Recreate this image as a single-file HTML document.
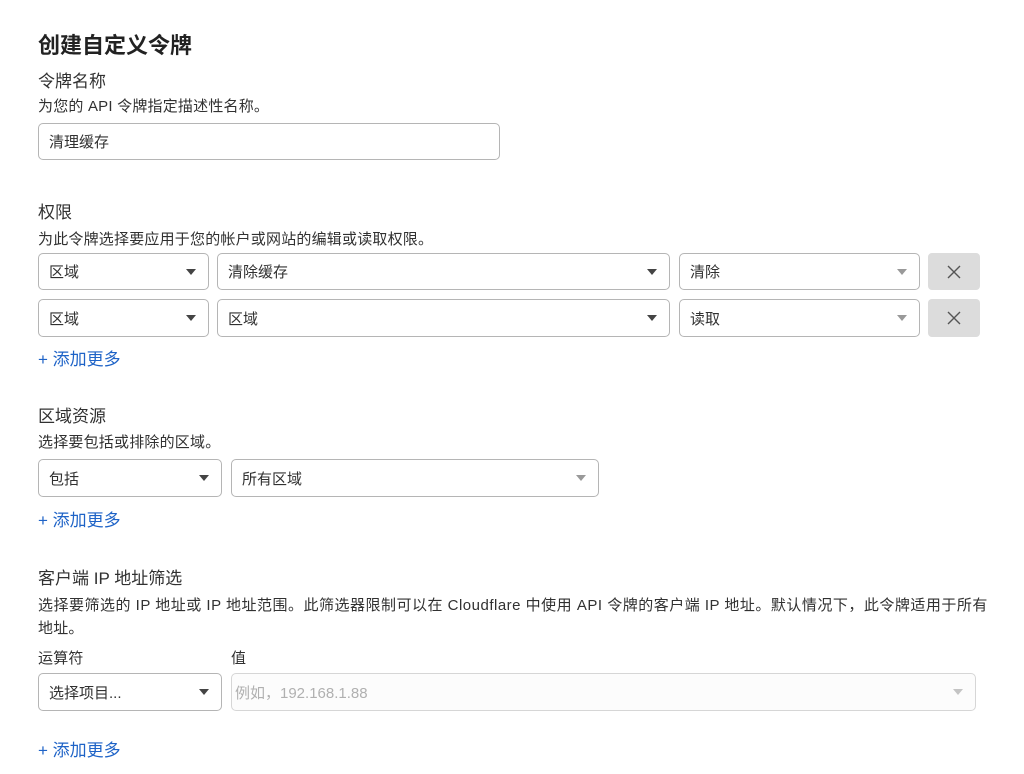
<!DOCTYPE html>
<html><head><meta charset="utf-8"><style>
*{box-sizing:border-box;margin:0;padding:0}
body{width:1024px;height:774px;background:#fff;font-family:"Liberation Sans","Noto Sans CJK SC",sans-serif;color:#313131;position:relative;overflow:hidden}
.a{position:absolute;white-space:nowrap}
.t{font-size:22px;font-weight:bold;color:#222}
.l{font-size:17px;color:#313131}
.d{font-size:15px;color:#313131;letter-spacing:0.2px}
.b{position:absolute;border:1px solid #b5b5b5;border-radius:5px;background:#fff;font-size:15px;color:#313131;padding-left:10px;display:flex;align-items:center}
.b .ar{position:absolute;right:12px;top:50%;margin-top:-3px;width:0;height:0;border-left:5px solid transparent;border-right:5px solid transparent;border-top:6px solid #444}
.b .ar.g{border-top-color:#999}
.x{position:absolute;background:#dcdcdc;border-radius:4px;display:flex;align-items:center;justify-content:center}
.add{font-size:17px;color:#1e63c7}
</style></head><body>
<div class="a t" style="left:38px;top:28px">创建自定义令牌</div>
<div class="a l" style="left:38px;top:67px">令牌名称</div>
<div class="a d" style="left:38px;top:95px">为您的 API 令牌指定描述性名称。</div>
<div class="b" style="left:38px;top:123px;width:462px;height:37px">清理缓存</div>

<div class="a l" style="left:38px;top:198px">权限</div>
<div class="a d" style="left:38px;top:228px">为此令牌选择要应用于您的帐户或网站的编辑或读取权限。</div>
<div class="b" style="left:38px;top:253px;width:171px;height:37px">区域<span class="ar"></span></div>
<div class="b" style="left:217px;top:253px;width:453px;height:37px">清除缓存<span class="ar"></span></div>
<div class="b" style="left:679px;top:253px;width:241px;height:37px">清除<span class="ar g"></span></div>
<div class="x" style="left:928px;top:253px;width:52px;height:37px"><svg width="16" height="16"><path d="M2 2L14 14M14 2L2 14" stroke="#555" stroke-width="1.4"/></svg></div>
<div class="b" style="left:38px;top:299px;width:171px;height:38px">区域<span class="ar"></span></div>
<div class="b" style="left:217px;top:299px;width:453px;height:38px">区域<span class="ar"></span></div>
<div class="b" style="left:679px;top:299px;width:241px;height:38px">读取<span class="ar g"></span></div>
<div class="x" style="left:928px;top:299px;width:52px;height:38px"><svg width="16" height="16"><path d="M2 2L14 14M14 2L2 14" stroke="#555" stroke-width="1.4"/></svg></div>
<div class="a add" style="left:38px;top:345px">+&nbsp;添加更多</div>

<div class="a l" style="left:38px;top:402px">区域资源</div>
<div class="a d" style="left:38px;top:431px">选择要包括或排除的区域。</div>
<div class="b" style="left:38px;top:459px;width:184px;height:38px">包括<span class="ar"></span></div>
<div class="b" style="left:231px;top:459px;width:368px;height:38px">所有区域<span class="ar g"></span></div>
<div class="a add" style="left:38px;top:506px">+&nbsp;添加更多</div>

<div class="a l" style="left:38px;top:564px">客户端 IP 地址筛选</div>
<div class="a d" style="left:38px;top:594px;letter-spacing:0.5px">选择要筛选的 IP 地址或 IP 地址范围。此筛选器限制可以在 Cloudflare 中使用 API 令牌的客户端 IP 地址。默认情况下，此令牌适用于所有</div>
<div class="a d" style="left:38px;top:617px">地址。</div>
<div class="a d" style="left:38px;top:647px">运算符</div>
<div class="a d" style="left:231px;top:647px">值</div>
<div class="b" style="left:38px;top:673px;width:184px;height:38px">选择项目...<span class="ar"></span></div>
<div class="b" style="left:231px;top:673px;width:745px;height:38px;border-color:#d6d6d6;background:#fcfcfc;color:#b0b0b0;padding-left:3px">例如，192.168.1.88<span class="ar" style="border-top-color:#c4c4c4"></span></div>
<div class="a add" style="left:38px;top:736px">+&nbsp;添加更多</div>
</body></html>
